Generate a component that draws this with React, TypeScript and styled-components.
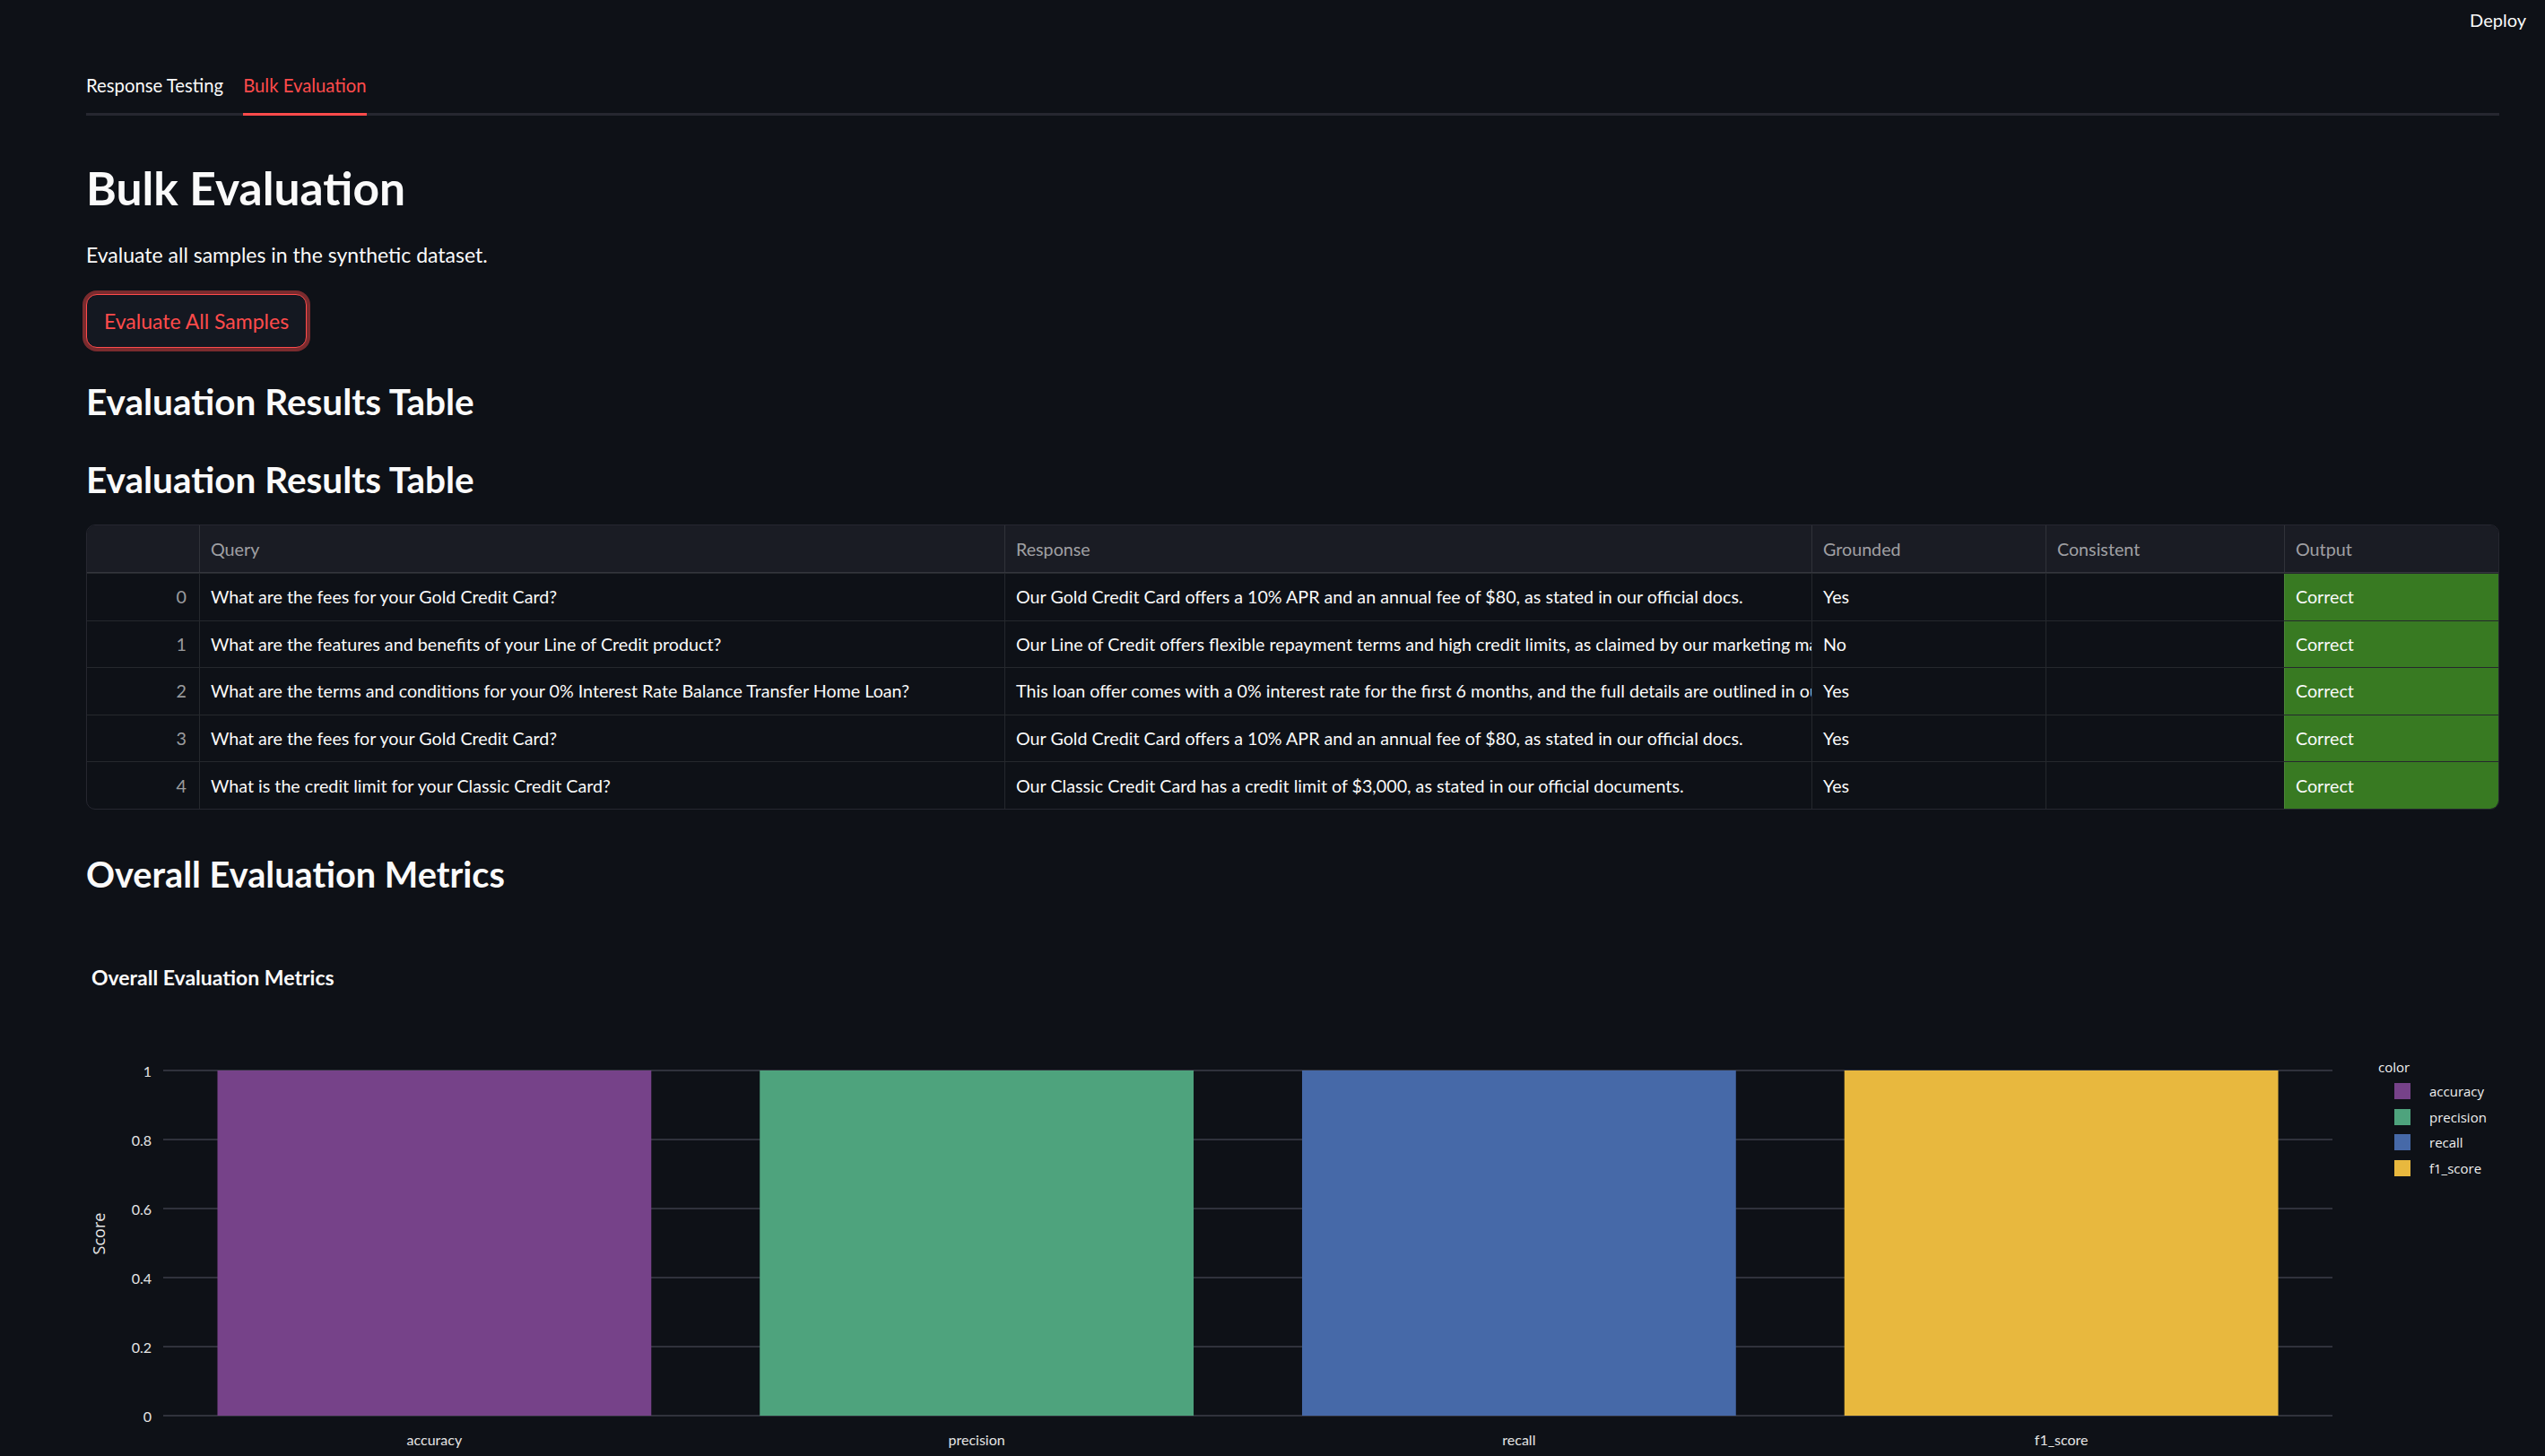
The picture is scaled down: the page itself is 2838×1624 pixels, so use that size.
import React from 'react';
import styled, { createGlobalStyle } from 'styled-components';

const GlobalStyle = createGlobalStyle`
  html, body {
    margin: 0;
    padding: 0;
    background: #0e1117;
  }

  body {
    font-family: Lato, 'Noto Sans', sans-serif;
    color: #fafafa;
    overflow: hidden;
  }

  * {
    box-sizing: border-box;
  }
`;

const Page = styled.div`
  width: 2838px;
  height: 1624px;
  overflow: hidden;
  background: #0e1117;
`;

const TopBar = styled.header`
  height: 44px;
  display: flex;
  align-items: center;
  justify-content: flex-end;
  padding-right: 21px;
`;

const DeployButton = styled.span`
  font-size: 20px;
  color: #fafafa;
  cursor: pointer;
`;

const Main = styled.main`
  padding: 0 51px 0 96px;
`;

const TabList = styled.nav`
  display: flex;
  gap: 22px;
  margin-top: 39px;
  border-bottom: 3px solid #262730;
`;

const Tab = styled.button<{ $active?: boolean }>`
  background: none;
  border: none;
  padding: 0 0 19px;
  margin-bottom: -3px;
  border-bottom: 3px solid ${(p) => (p.$active ? '#ff4b4b' : 'transparent')};
  color: ${(p) => (p.$active ? '#ff4b4b' : '#fafafa')};
  font-family: inherit;
  font-size: 20.3px;
  line-height: 24px;
  cursor: pointer;
`;

const Title = styled.h1`
  margin: 50px 0 0;
  font-size: 51.5px;
  line-height: 60px;
  font-weight: 700;
`;

const Lead = styled.p`
  margin: 29px 0 0;
  font-size: 23px;
  line-height: 33px;
`;

const PrimaryButton = styled.button`
  margin-top: 27px;
  height: 60px;
  padding: 0 19px;
  border: 1.5px solid #ff4b4b;
  border-radius: 12px;
  background: #141821;
  box-shadow: 0 0 0 4px rgba(255, 75, 75, 0.45);
  color: #ff4b4b;
  font-family: inherit;
  font-size: 23px;
  cursor: pointer;
`;

const SectionHeading = styled.h3<{ $mt: number }>`
  margin: ${(p) => p.$mt}px 0 0;
  font-size: 40.5px;
  line-height: 48px;
  font-weight: 700;
`;

const BigHeading = styled.h2`
  margin: 46px 0 0;
  font-size: 39.7px;
  line-height: 52px;
  font-weight: 700;
`;

const columns = '125px 898px 900px 261px 266px 239px';

const Table = styled.div`
  margin-top: 26px;
  border: 1px solid #262730;
  border-radius: 10px;
  overflow: hidden;
`;

const Row = styled.div<{ $header?: boolean }>`
  display: grid;
  grid-template-columns: ${columns};
  height: ${(p) => (p.$header ? '53px' : '52.6px')};
  background: ${(p) => (p.$header ? '#1a1c24' : 'transparent')};
  border-top: ${(p) => (p.$header ? 'none' : '1px solid rgba(250, 250, 250, 0.1)')};
  ${(p) => p.$header && 'border-bottom: 1px solid rgba(250, 250, 250, 0.12);'}
`;

const Cell = styled.div<{ $align?: 'left' | 'right'; $muted?: boolean; $good?: boolean }>`
  display: flex;
  align-items: center;
  justify-content: ${(p) => (p.$align === 'right' ? 'flex-end' : 'flex-start')};
  padding: ${(p) => (p.$align === 'right' ? '0 14px 0 8px' : '0 12px')};
  border-left: 1px solid rgba(250, 250, 250, 0.1);
  background: ${(p) => (p.$good ? '#387a22' : 'transparent')};
  color: ${(p) => (p.$muted ? 'rgba(250, 250, 250, 0.6)' : '#fafafa')};
  font-size: 19.7px;
  white-space: nowrap;
  overflow: hidden;
  text-overflow: clip;

  &:first-child {
    border-left: none;
  }
`;

const ChartBlock = styled.section`
  margin-top: 75px;
`;

const ChartTitle = styled.div`
  padding-left: 6px;
  font-size: 23px;
  line-height: 28px;
  font-weight: 700;
`;

const ChartRow = styled.div`
  display: flex;
  align-items: flex-start;
  margin-top: 75px;
`;

const Legend = styled.div`
  margin-left: 36px;
  margin-top: -2px;
  font-family: 'Open Sans', 'DejaVu Sans', sans-serif;
  font-size: 15px;
  color: #f0f0f0;
`;

const LegendTitle = styled.div`
  height: 26px;
  line-height: 26px;
`;

const LegendItem = styled.div`
  display: flex;
  align-items: center;
  height: 28.5px;
  padding-left: 18px;
`;

const Swatch = styled.span<{ $color: string }>`
  width: 18px;
  height: 18px;
  margin-right: 21px;
  background: ${(p) => p.$color};
`;

const rows = [
  {
    query: 'What are the fees for your Gold Credit Card?',
    response: 'Our Gold Credit Card offers a 10% APR and an annual fee of $80, as stated in our official docs.',
    grounded: 'Yes',
  },
  {
    query: 'What are the features and benefits of your Line of Credit product?',
    response:
      'Our Line of Credit offers flexible repayment terms and high credit limits, as claimed by our marketing materials.',
    grounded: 'No',
  },
  {
    query: 'What are the terms and conditions for your 0% Interest Rate Balance Transfer Home Loan?',
    response:
      'This loan offer comes with a 0% interest rate for the first 6 months, and the full details are outlined in our official terms.',
    grounded: 'Yes',
  },
  {
    query: 'What are the fees for your Gold Credit Card?',
    response: 'Our Gold Credit Card offers a 10% APR and an annual fee of $80, as stated in our official docs.',
    grounded: 'Yes',
  },
  {
    query: 'What is the credit limit for your Classic Credit Card?',
    response: 'Our Classic Credit Card has a credit limit of $3,000, as stated in our official documents.',
    grounded: 'Yes',
  },
];

const metrics = [
  { name: 'accuracy', value: 1, color: '#764289' },
  { name: 'precision', value: 1, color: '#4ea37d' },
  { name: 'recall', value: 1, color: '#4669a8' },
  { name: 'f1_score', value: 1, color: '#e8b83e' },
];

const plotLeft = 86;
const plotRight = 2505;
const plotTop = 15;
const plotBottom = 400;

const BarChart = () => {
  const band = (plotRight - plotLeft) / metrics.length;
  const ticks = [0, 0.2, 0.4, 0.6, 0.8, 1];
  const yOf = (v: number) => plotBottom - v * (plotBottom - plotTop);

  return (
    <svg width={2520} height={444}>
      {ticks.map((t) => (
        <g key={t}>
          <line x1={plotLeft} x2={plotRight} y1={yOf(t)} y2={yOf(t)} stroke="#30323c" strokeWidth={2} />
          <text
            x={73}
            y={yOf(t)}
            textAnchor="end"
            dominantBaseline="central"
            fill="#e4e4e4"
            fontFamily="Lato, sans-serif"
            fontSize={16}
          >
            {t}
          </text>
        </g>
      ))}
      {metrics.map((m, i) => (
        <g key={m.name}>
          <rect
            x={plotLeft + i * band + band * 0.1}
            y={yOf(m.value)}
            width={band * 0.8}
            height={yOf(0) - yOf(m.value)}
            fill={m.color}
          />
          <text
            x={plotLeft + i * band + band / 2}
            y={426}
            textAnchor="middle"
            dominantBaseline="central"
            fill="#e4e4e4"
            fontFamily="Lato, sans-serif"
            fontSize={16}
          >
            {m.name}
          </text>
        </g>
      ))}
      <text
        x={14}
        y={197}
        transform="rotate(-90 14 197)"
        textAnchor="middle"
        dominantBaseline="central"
        fill="#e4e4e4"
        fontFamily="'Open Sans', sans-serif"
        fontSize={18}
      >
        Score
      </text>
    </svg>
  );
};

const App = () => (
  <Page>
    <GlobalStyle />
    <TopBar>
      <DeployButton>Deploy</DeployButton>
    </TopBar>
    <Main>
      <TabList>
        <Tab>Response Testing</Tab>
        <Tab $active>Bulk Evaluation</Tab>
      </TabList>

      <Title>Bulk Evaluation</Title>
      <Lead>Evaluate all samples in the synthetic dataset.</Lead>
      <PrimaryButton>Evaluate All Samples</PrimaryButton>

      <SectionHeading $mt={36}>Evaluation Results Table</SectionHeading>
      <SectionHeading $mt={39}>Evaluation Results Table</SectionHeading>

      <Table>
        <Row $header>
          <Cell />
          <Cell $muted>Query</Cell>
          <Cell $muted>Response</Cell>
          <Cell $muted>Grounded</Cell>
          <Cell $muted>Consistent</Cell>
          <Cell $muted>Output</Cell>
        </Row>
        {rows.map((r, i) => (
          <Row key={i}>
            <Cell $align="right" $muted>
              {i}
            </Cell>
            <Cell>{r.query}</Cell>
            <Cell>{r.response}</Cell>
            <Cell>{r.grounded}</Cell>
            <Cell />
            <Cell $good>Correct</Cell>
          </Row>
        ))}
      </Table>

      <BigHeading>Overall Evaluation Metrics</BigHeading>

      <ChartBlock>
        <ChartTitle>Overall Evaluation Metrics</ChartTitle>
        <ChartRow>
          <BarChart />
          <Legend>
            <LegendTitle>color</LegendTitle>
            {metrics.map((m) => (
              <LegendItem key={m.name}>
                <Swatch $color={m.color} />
                {m.name}
              </LegendItem>
            ))}
          </Legend>
        </ChartRow>
      </ChartBlock>
    </Main>
  </Page>
);

export default App;
